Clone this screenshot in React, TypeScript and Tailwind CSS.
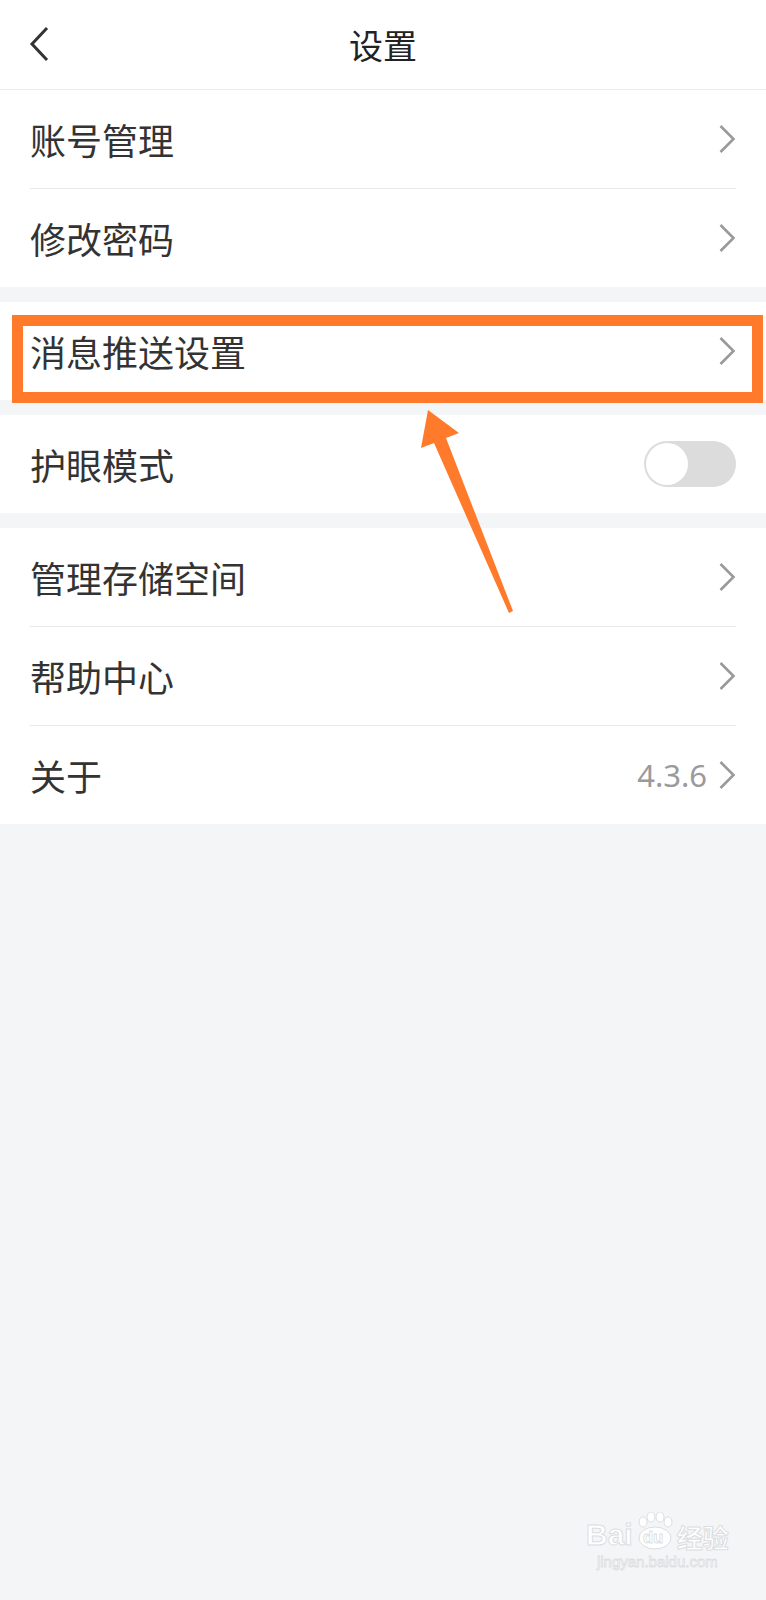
import React from "react";

const Chevron = () => (
  <svg width="18" height="30" viewBox="0 0 18 30" className="shrink-0">
    <path d="M2.5 2 L15.5 15 L2.5 28" fill="none" stroke="#9a9a9a" strokeWidth="2.6" strokeLinejoin="miter" />
  </svg>
);

const Row = ({ label, right }: { label: string; right?: React.ReactNode }) => (
  <div className="h-[98px] flex items-center justify-between pl-[30px] pr-[30px]">
    <span className="text-[36px] leading-none text-[#333333]">{label}</span>
    {right ?? <Chevron />}
  </div>
);

const Divider = () => <div className="h-px bg-[#e9e9e9] mx-[30px]" />;
const Gap = () => <div className="h-[15px]" />;

export default function App() {
  return (
    <div
      className="relative w-full min-h-[1600px] bg-[#f4f5f7] overflow-hidden"
      style={{ fontFamily: '"Noto Sans CJK SC", "Noto Sans", sans-serif' }}
    >
      {/* Header */}
      <div className="relative h-[90px] bg-white border-b border-[#ebebeb] flex items-center justify-center">
        <svg width="22" height="36" viewBox="0 0 22 36" className="absolute left-[29px] top-[26px]">
          <path d="M18 2 L3 18 L18 34" fill="none" stroke="#333333" strokeWidth="3" />
        </svg>
        <span className="text-[34px] leading-none text-[#222222]">设置</span>
      </div>

      <div className="bg-white">
        <Row label="账号管理" />
        <Divider />
        <Row label="修改密码" />
      </div>
      <Gap />
      <div className="bg-white">
        <Row label="消息推送设置" />
      </div>
      <Gap />
      <div className="bg-white">
        <Row
          label="护眼模式"
          right={
            <div className="w-[92px] h-[46px] rounded-full bg-[#dcdcdc] p-[2px] flex items-center">
              <div className="w-[42px] h-[42px] rounded-full bg-white" />
            </div>
          }
        />
      </div>
      <Gap />
      <div className="bg-white">
        <Row label="管理存储空间" />
        <Divider />
        <Row label="帮助中心" />
        <Divider />
        <Row
          label="关于"
          right={
            <div className="flex items-center gap-[11px]">
              <span className="text-[31px] leading-none text-[#9a9a9a]" style={{ fontFamily: '"Noto Sans", sans-serif' }}>
                4.3.6
              </span>
              <Chevron />
            </div>
          }
        />
      </div>

      {/* Annotation box */}
      <div className="absolute left-[12px] top-[315px] w-[751px] h-[88px] border-[11px] border-[#ff7a2b] pointer-events-none" />

      {/* Annotation arrow */}
      <svg className="absolute left-0 top-0 pointer-events-none" width="766" height="700" viewBox="0 0 766 700">
        <polygon
          points="428,410 459,433 446,438 513,611 509,613 434,443 421,448"
          fill="#ff7a2b"
        />
      </svg>

      {/* Watermark */}
      <div className="absolute left-[586px] top-[1512px] flex flex-col items-center pointer-events-none">
        <div className="flex items-end gap-[2px]">
          <span
            className="text-[30px] leading-none font-bold text-white"
            style={{ fontFamily: '"Liberation Sans", sans-serif', WebkitTextStroke: "1px #dcdde0" }}
          >
            Bai
          </span>
          <div className="relative w-[40px] h-[38px]">
            <svg width="40" height="38" viewBox="0 0 40 38" className="absolute inset-0">
              <g fill="white" stroke="#dcdde0" strokeWidth="1">
                <ellipse cx="8" cy="10" rx="4" ry="5" />
                <ellipse cx="16" cy="5" rx="4" ry="5" />
                <ellipse cx="25" cy="5" rx="4" ry="5" />
                <ellipse cx="33" cy="10" rx="4" ry="5" />
                <ellipse cx="20" cy="26" rx="16" ry="11" />
              </g>
            </svg>
            <span
              className="absolute left-[8px] top-[17px] text-[17px] leading-none font-bold text-white"
              style={{ fontFamily: '"Liberation Sans", sans-serif', WebkitTextStroke: "0.8px #dcdde0" }}
            >
              du
            </span>
          </div>
          <span
            className="text-[26px] leading-none font-bold text-white"
            style={{ WebkitTextStroke: "1px #dcdde0" }}
          >
            经验
          </span>
        </div>
        <span
          className="mt-[4px] text-[15px] leading-none text-white"
          style={{ fontFamily: '"Liberation Sans", sans-serif', WebkitTextStroke: "0.8px #dcdde0" }}
        >
          jingyan.baidu.com
        </span>
      </div>
    </div>
  );
}
